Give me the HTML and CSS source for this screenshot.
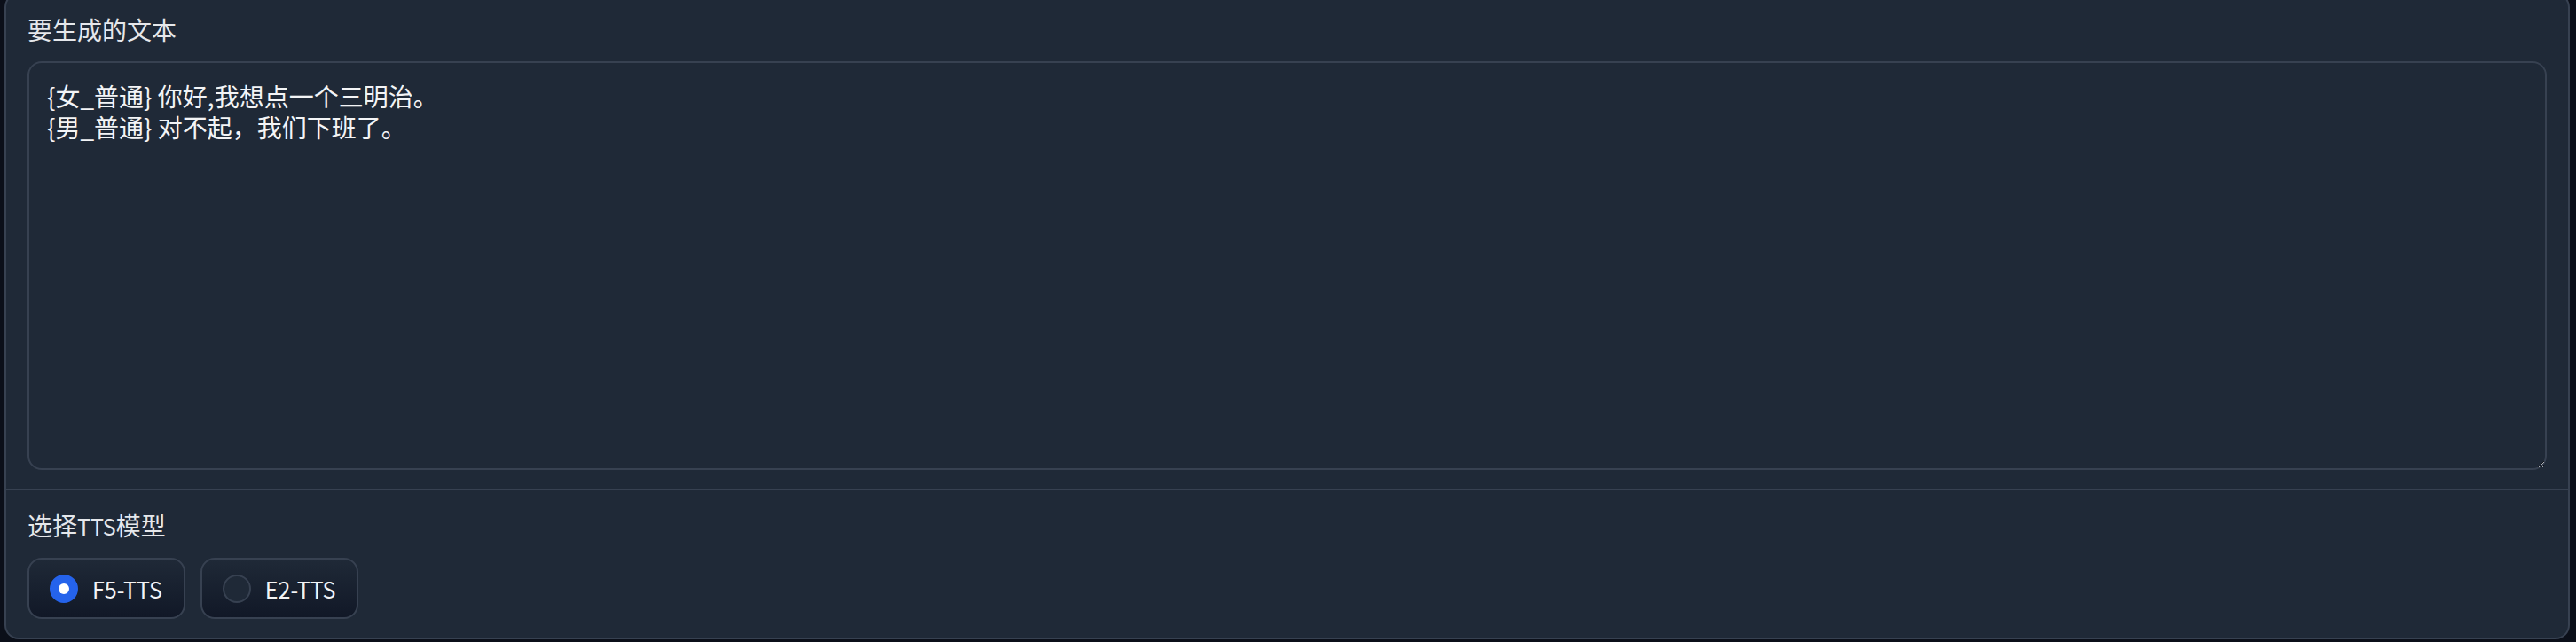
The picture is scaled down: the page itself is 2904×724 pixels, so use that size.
FILE: index.html
```html
<!DOCTYPE html>
<html lang="zh">
<head>
<meta charset="utf-8">
<title>TTS</title>
<link rel="stylesheet" href="styles.css">
</head>
<body>
<div class="panel">
  <div class="block">
    <label class="label" for="gen-text">要生成的文本</label>
    <textarea id="gen-text" class="input">{女_普通} 你好,我想点一个三明治。
{男_普通} 对不起，我们下班了。</textarea>
  </div>
  <div class="block block-sep">
    <div class="label">选择<span class="latin">TTS</span>模型</div>
    <div class="options">
      <label class="option"><input type="radio" name="model" class="radio" checked><span class="option-text">F5-TTS</span></label>
      <label class="option"><input type="radio" name="model" class="radio"><span class="option-text">E2-TTS</span></label>
    </div>
  </div>
</div>
</body>
</html>
```

FILE: styles.css
```css
html, body {
  margin: 0;
  padding: 0;
  background: #0b0f19;
  overflow: hidden;
}
body {
  font-family: "Noto Sans CJK SC", "Noto Sans", sans-serif;
  color: #f3f4f6;
}
.panel {
  margin: -8px 0 0 5px;
  width: 2892px;
  box-sizing: border-box;
  border: 2px solid #374151;
  border-radius: 16px;
  background: #1f2937;
  overflow: hidden;
}
.block {
  padding: 20px 24px 21px;
  display: flex;
  flex-direction: column;
}
.block-sep {
  border-top: 2px solid #374151;
}
.label {
  display: block;
  font-size: 28px;
  line-height: 39px;
  color: #e5e7eb;
  margin-bottom: 16px;
}
.latin {
  font-size: 25px;
}
.input {
  display: block;
  width: 100%;
  height: 461px;
  box-sizing: border-box;
  margin: 0;
  padding: 20px;
  border: 2px solid #374151;
  border-radius: 16px;
  background: #1f2937;
  color: #f3f4f6;
  font-family: "Noto Sans CJK SC", sans-serif;
  font-size: 28px;
  line-height: 35px;
  color-scheme: dark;
  outline: none;
  resize: vertical;
}
.options {
  display: flex;
  gap: 17px;
}
.option {
  display: flex;
  align-items: center;
  height: 69px;
  box-sizing: border-box;
  padding: 0 24px 0 23px;
  border: 2px solid #374151;
  border-radius: 16px;
  background: linear-gradient(to top, #111827, #1f2937);
}
.radio {
  appearance: none;
  -webkit-appearance: none;
  margin: 0;
  width: 32px;
  height: 32px;
  box-sizing: border-box;
  border-radius: 50%;
  border: 2px solid #374151;
  background: #1f2937;
  display: grid;
  place-items: center;
}
.radio:checked {
  border-color: #2563eb;
  background: #2563eb;
}
.radio:checked::after {
  content: "";
  width: 12px;
  height: 12px;
  border-radius: 50%;
  background: #ffffff;
}
.option-text {
  margin-left: 16px;
  font-size: 25px;
  line-height: 32px;
  color: #f3f4f6;
}
```
